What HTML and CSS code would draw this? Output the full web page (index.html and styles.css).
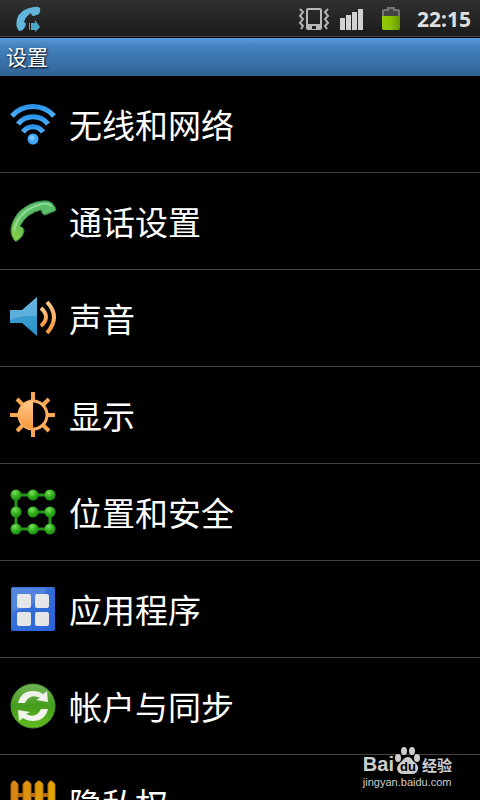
FILE: index.html
```
<!DOCTYPE html>
<html lang="zh-CN">
  <head>
    <meta charset="utf-8">
    <meta name="viewport" content="width=device-width, initial-scale=1">
    <title>设置</title>
    <link rel="stylesheet" href="styles.css">
  </head>
  <body>
    <div class="screen">
      <div class="status-bar">
        <svg class="call-forward" width="30" height="30" viewBox="0 0 30 30">
          <path d="M20 3 Q24 2 26 4 Q27 7 25 10 L20 12 Q17 12 17 9 Q12 12 10 18 Q13 19 11 23 Q9 27 5 27 Q1 22 3 15 Q6 5 20 3Z" fill="#62b6dc"/>
          <path d="M15 19h1v7h-1zM17 19h4v-3l5 7l-5 5v-2h-4z" fill="#4ba6cc"/>
        </svg>
        <div class="status-icons">
          <svg width="32" height="26" viewBox="0 0 32 26">
            <path d="M8 4q0-2 2-2h12q2 0 2 2v18q0 2-2 2H10q-2 0-2-2zM10 4v14h12V4zM14 20v3h4v-3z" fill="#b9b9b9" fill-rule="evenodd"/>
            <path d="M2 3l3 3-3 4 3 3-3 4 3 3-2 3M30 3l-3 3 3 4-3 3 3 4-3 3 2 3" fill="none" stroke="#b5b5b5" stroke-width="2"/>
          </svg>
          <svg width="26" height="26" viewBox="0 0 26 26">
            <path d="M0 12h5v12H0zM6 9h5v15H6zM12 6h5v18h-5zM18 3h5v21h-5z" fill="#d2d2d2"/>
          </svg>
          <svg class="battery" width="18" height="26" viewBox="0 0 18 26">
            <path d="M1 12V5q0-1 1-1h4V2h6v2h4q1 0 1 1v7" fill="#444" stroke="#777" stroke-width="2"/>
            <path d="M0 10h18v12q0 2-2 2H2q-2 0-2-2z" fill="url(#charge)"/>
          </svg>
          <span class="clock">22:15</span>
        </div>
      </div>
      <h1 class="title">设置</h1>

      <ul class="list">
        <li><a href="#wireless" class="item">
          <svg class="icon" viewBox="0 0 48 48">
            <g fill="none" stroke="url(#sky)" stroke-width="5">
              <path d="M3 16A28 28 0 0 1 45 16"/>
              <path d="M9 24A19 19 0 0 1 39 24"/>
              <path d="M14 32A12 12 0 0 1 34 32"/>
            </g>
            <circle cx="24" cy="39" r="5.500" fill="#41a7f5"/>
            <circle cx="23" cy="38" r="2.500" fill="#79c5fa"/>
          </svg>
          <span>无线和网络</span>
        </a></li>
        <li><a href="#call" class="item">
          <svg class="icon" viewBox="0 0 48 48">
            <path d="M5 43Q1 37 2 31Q4 21 11 14Q21 5 33 4Q40 3 43 6L46 10Q48 13 46 14L36 18Q33 18 32 13Q18 16 11 29Q16 31 15 35Q14 40 8 44Q6 45 5 43Z" fill="url(#handset)" stroke="#2f7a3e"/>
            <path d="M5 34Q9 13 33 7Q39 6 43 9" fill="none" stroke="#b1efba" stroke-width="2" opacity=".6"/>
          </svg>
          <span>通话设置</span>
        </a></li>
        <li><a href="#sound" class="item">
          <svg class="icon" viewBox="0 0 48 48">
            <path d="M1 16H13L28 3V42L13 29H1Z" fill="url(#speaker)"/>
            <path d="M1 16H13L28 3V22Q14 21 1 26Z" fill="#a7daf2" opacity=".3"/>
            <g fill="none" stroke="url(#orange)" stroke-width="4">
              <path d="M32 14Q42 23 32 32"/>
              <path d="M38 8Q52 23 38 39"/>
            </g>
          </svg>
          <span>声音</span>
        </a></li>
        <li><a href="#display" class="item">
          <svg class="icon" viewBox="0 0 48 48">
            <path d="M24 1v9M24 38v8M1 24h9M38 24h8M8 8l6 6M34 34l6 6M40 8l-6 6M14 34l-6 6" stroke="#fba653" stroke-width="4"/>
            <circle cx="24" cy="24" r="14" fill="#000" stroke="#fbaf61" stroke-width="3"/>
            <path d="M24 10A14 14 0 0 0 24 38Z" fill="url(#orange)"/>
          </svg>
          <span>显示</span>
        </a></li>
        <li><a href="#security" class="item">
          <svg class="icon" viewBox="0 0 48 48">
            <path d="M41 7H7V41H41V24H24" fill="none" stroke="#27931d" stroke-width="3"/>
            <g fill="url(#ball)">
              <circle cx="7" cy="7" r="5.500"/><circle cx="24" cy="7" r="5.500"/><circle cx="41" cy="7" r="5.500"/>
              <circle cx="7" cy="24" r="5.500"/><circle cx="24" cy="24" r="5.500"/><circle cx="41" cy="24" r="5.500"/>
              <circle cx="7" cy="41" r="5.500"/><circle cx="24" cy="41" r="5.500"/><circle cx="41" cy="41" r="5.500"/>
            </g>
          </svg>
          <span>位置和安全</span>
        </a></li>
        <li><a href="#apps" class="item">
          <svg class="icon" viewBox="0 0 48 48">
            <rect x="2" y="2" width="44" height="44" rx="2" fill="url(#tile)"/>
            <path d="M3 3H38Q32 20 3 27Z" fill="#fff" opacity=".12"/>
            <g fill="#e4e6e8">
              <rect x="8" y="9" width="14" height="14" rx="2"/>
              <rect x="26" y="9" width="14" height="14" rx="2"/>
              <rect x="8" y="27" width="14" height="14" rx="2"/>
              <rect x="26" y="27" width="14" height="14" rx="2"/>
            </g>
          </svg>
          <span>应用程序</span>
        </a></li>
        <li><a href="#accounts" class="item">
          <svg class="icon" viewBox="0 0 48 48">
            <circle cx="24" cy="24" r="22" fill="url(#globe)" stroke="#4f9630"/>
            <g fill="#f0f2ec">
              <path id="arrow" d="M9 21Q12 9 24 9Q30 9 34 12L38 9L39 20L27 18L31 16Q21 11 16 21Z"/>
              <use href="#arrow" transform="rotate(180 24 24)"/>
            </g>
          </svg>
          <span>帐户与同步</span>
        </a></li>
        <li><a href="#privacy" class="item">
          <svg class="icon" viewBox="0 0 48 48">
            <path d="M4 14h40v4H4zM4 34h40v4H4z" fill="#b96a10"/>
            <path d="M2 46V5l2-3h2l3 3v41zM14 46V5l3-3h2l3 3v41zM26 46V5l3-3h2l3 3v41zM39 46V5l2-3h2l3 3v41z" fill="url(#fence)" stroke="#b36a05"/>
          </svg>
          <span>隐私权</span>
        </a></li>
      </ul>

      <div class="watermark">
        <div class="brand">
          <span class="bai">Bai</span>
          <span class="paw">
            <svg width="26" height="28" viewBox="0 0 26 28">
              <g fill="#cdcdcd">
                <ellipse cx="9" cy="5" rx="3" ry="4"/>
                <ellipse cx="17" cy="5" rx="3" ry="4"/>
                <ellipse cx="3" cy="12" rx="3" ry="4"/>
                <ellipse cx="22" cy="12" rx="3" ry="4"/>
                <path d="M13 11Q16 11 18 15Q24 19 23 23Q22 28 17 28H8Q3 28 2 23Q2 19 7 15Q10 11 13 11Z"/>
              </g>
            </svg>
            <b>du</b>
          </span>
          <span class="jingyan">经验</span>
        </div>
        <div class="site">jingyan.baidu.com</div>
      </div>
    </div>

    <!-- shared gradients -->
    <svg class="defs" width="0" height="0">
      <defs>
        <linearGradient id="charge"><stop offset="0" stop-color="#93cc08"/><stop offset=".5" stop-color="#88c000"/><stop offset="1" stop-color="#659800"/></linearGradient>
        <linearGradient id="sky" x2="0" y2="1"><stop offset="0" stop-color="#2c94ec"/><stop offset="1" stop-color="#4eb0f8"/></linearGradient>
        <linearGradient id="handset" x1="1" x2="0" y2="1"><stop offset="0" stop-color="#56bd6a"/><stop offset=".6" stop-color="#5fbd66"/><stop offset="1" stop-color="#8cd238"/></linearGradient>
        <linearGradient id="speaker" x2="0" y2="1"><stop offset="0" stop-color="#4ba5d3"/><stop offset="1" stop-color="#2892cb"/></linearGradient>
        <linearGradient id="orange" x2="0" y2="1"><stop offset="0" stop-color="#ffc78a"/><stop offset="1" stop-color="#f9983c"/></linearGradient>
        <radialGradient id="ball" cx=".4" cy=".3" r=".7"><stop offset="0" stop-color="#7de262"/><stop offset=".5" stop-color="#35b51f"/><stop offset="1" stop-color="#1c8a10"/></radialGradient>
        <linearGradient id="tile" x2="1" y2="1"><stop offset="0" stop-color="#3f78d8"/><stop offset="1" stop-color="#2862d8"/></linearGradient>
        <linearGradient id="globe" x2="0" y2="1"><stop offset="0" stop-color="#72b558"/><stop offset=".5" stop-color="#449c1c"/><stop offset="1" stop-color="#63bd20"/></linearGradient>
        <linearGradient id="fence"><stop offset="0" stop-color="#d98516"/><stop offset="1" stop-color="#e0a800"/></linearGradient>
      </defs>
    </svg>
  </body>
</html>
```
FILE: styles.css
```
* {
  box-sizing: border-box;
  margin: 0;
  padding: 0;
}
body {
  background-color: #000;
  color: #fff;
  font-family: "Noto Sans", "Noto Sans CJK SC", sans-serif;
}
.screen {
  position: relative;
  height: 100vh;
  overflow: hidden;
}
.status-bar {
  display: flex;
  align-items: center;
  justify-content: space-between;
  height: 38px;
  padding: 0 9px 0 14px;
  background: linear-gradient(#303030, #1b1b1b);
  border-bottom: 1px solid #000;
  box-shadow: inset 0 -1px #4a4a4a;
}
.status-icons {
  display: flex;
  align-items: center;
  gap: 10px;
}
.battery {
  margin-left: 6px;
}
.clock {
  margin-left: 7px;
  color: #dedede;
  font-size: 21px;
  font-weight: 700;
  line-height: 36px;
}
.title {
  height: 38px;
  padding-left: 6px;
  background: linear-gradient(#5d9adb, #4582c0 20%, #2f6396);
  font-family: "Noto Sans CJK SC", sans-serif;
  font-size: 21px;
  font-weight: 400;
  line-height: 36px;
  text-shadow: 1px 1px 2px #000;
}
.list {
  list-style: none;
}
.item {
  display: flex;
  align-items: center;
  gap: 12px;
  height: 97px;
  padding: 0 9px;
  border-bottom: 1px solid #444;
  color: #fff;
  font-family: "Noto Sans CJK SC", sans-serif;
  font-size: 33px;
  line-height: 48px;
  text-decoration: none;
}
.icon {
  flex: none;
  width: 48px;
  height: 48px;
}
.watermark {
  position: absolute;
  right: 28px;
  bottom: 10px;
  color: #cdcdcd;
}
.brand {
  display: flex;
  align-items: flex-end;
  gap: 1px;
  height: 28px;
}
.bai {
  font-family: "Liberation Sans", sans-serif;
  font-size: 20px;
  font-weight: 700;
  line-height: 20px;
}
.paw {
  position: relative;
  width: 26px;
  height: 28px;
}
.paw b {
  position: absolute;
  left: 5px;
  bottom: 0;
  color: #000;
  font-family: "Liberation Sans", sans-serif;
  font-size: 13px;
  line-height: 14px;
}
.jingyan {
  font-family: "Noto Sans CJK SC", sans-serif;
  font-size: 15px;
  font-weight: 700;
  line-height: 18px;
}
.site {
  font-family: "Liberation Sans", sans-serif;
  font-size: 11px;
  line-height: 16px;
}
.defs {
  position: absolute;
}
```
